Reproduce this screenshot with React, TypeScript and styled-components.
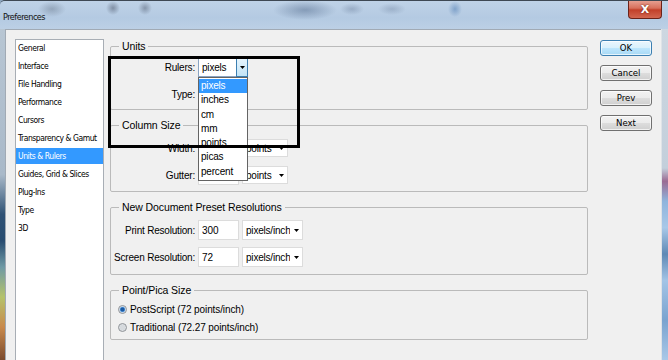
import React from "react";
import styled, { createGlobalStyle, css } from "styled-components";

const GlobalStyle = createGlobalStyle`
  html, body {
    margin: 0;
    padding: 0;
  }
  body {
    width: 668px;
    height: 360px;
    overflow: hidden;
    background: #8ea6bf;
    font-family: "Liberation Sans", Arial, sans-serif;
    color: #000;
  }
  * {
    box-sizing: border-box;
  }
`;

const narrow = `"Liberation Sans Narrow", "DejaVu Sans Condensed", "Liberation Sans", sans-serif`;

const Window = styled.div`
  width: 668px;
  height: 360px;
  display: flex;
  flex-direction: column;
  overflow: hidden;
  border-top: 1px solid #3e4853;
  border-top-left-radius: 5px;
`;

// glass caption with the blurred desktop behind it
const TitleBar = styled.div`
  height: 28px;
  flex-shrink: 0;
  display: flex;
  justify-content: space-between;
  align-items: flex-start;
  background:
    radial-gradient(ellipse 14px 8px at 52px 8px, rgba(90, 105, 125, 0.4), transparent),
    radial-gradient(ellipse 7px 7px at 113px 7px, rgba(70, 80, 100, 0.5), transparent),
    radial-gradient(ellipse 7px 7px at 145px 7px, rgba(70, 80, 100, 0.45), transparent),
    radial-gradient(ellipse 32px 10px at 305px 9px, rgba(70, 95, 130, 0.45), transparent),
    radial-gradient(ellipse 12px 6px at 352px 8px, rgba(90, 110, 140, 0.35), transparent),
    radial-gradient(ellipse 14px 6px at 392px 8px, rgba(90, 110, 140, 0.3), transparent),
    radial-gradient(ellipse 7px 8px at 455px 8px, rgba(60, 110, 170, 0.45), transparent),
    linear-gradient(#bfd2e7, #b4cae2 60%, #bcd0e5);
`;

const Caption = styled.span`
  margin: 11px 0 0 3px;
  font-family: ${narrow};
  font-size: 9px;
  letter-spacing: -0.5px;
  line-height: 11px;
  color: #111;
`;

const CloseButton = styled.div`
  width: 34px;
  height: 19px;
  margin-right: 6px;
  margin-top: -1px;
  display: flex;
  align-items: center;
  justify-content: center;
  border: 1px solid #6b2219;
  border-top: 0;
  border-radius: 0 0 4px 4px;
  background: linear-gradient(#e9a597 0%, #d8705c 45%, #c2402a 55%, #d26650 100%);
  color: #fff;
  font-family: "DejaVu Sans", sans-serif;
  font-weight: bold;
  font-size: 11px;
  text-shadow: 0 0 2px #5a1208;
`;

const Body = styled.div`
  flex: 1;
  min-height: 0;
  display: flex;
`;

const LeftFrame = styled.div`
  width: 5px;
  flex-shrink: 0;
  background: linear-gradient(
    #b8c6d3 0%,
    #a9b9c9 44%,
    #2f5275 56%,
    #284c70 64%,
    #6f9aa5 72%,
    #b5c36b 81%,
    #c98a4c 90%,
    #7a4a2e 100%
  );
`;

const RightFrame = styled.div`
  width: 7px;
  flex-shrink: 0;
  border-left: 1px solid #dfe3e7;
  background: linear-gradient(
    #cdd7e1 0%,
    #c3cfdb 42%,
    #9a6b93 46%,
    #8fb4dc 52%,
    #a9c8e8 60%,
    #5f89b5 68%,
    #a3c4e6 76%,
    #7aa3cf 88%,
    #a9c8e8 100%
  );
`;

const Panel = styled.div`
  flex: 1;
  position: relative;
  display: flex;
  align-items: flex-start;
  padding: 9px 8px 0 9px;
  background: #f0f0f0;
  border: 1px solid #a1aab4;
  border-bottom: 0;
  border-right: 0;
`;

const Sidebar = styled.ul`
  list-style: none;
  margin: 0;
  padding: 0;
  width: 89px;
  height: 340px;
  flex-shrink: 0;
  overflow: hidden;
  background: #fff;
  border: 1px solid #a8aeb5;
`;

const NavItem = styled.li<{ $active?: boolean }>`
  height: 16px;
  margin-bottom: 2px;
  padding: 1px 0 0 2px;
  font-family: ${narrow};
  font-size: 8.5px;
  letter-spacing: -0.45px;
  line-height: 15px;
  white-space: nowrap;
  background: ${(p) => (p.$active ? "#3399ff" : "transparent")};
  color: ${(p) => (p.$active ? "#fff" : "#000")};
`;

const Main = styled.div`
  width: 478px;
  flex-shrink: 0;
  margin: 1px 0 0 6px;
  display: flex;
  flex-direction: column;
  gap: 9px;
`;

const Group = styled.fieldset<{ $pt: number; $pb: number }>`
  margin: 0;
  min-width: 0;
  padding: ${(p) => p.$pt}px 0 ${(p) => p.$pb}px;
  border: 1px solid #bababa;
  border-radius: 2px;
`;

const Legend = styled.legend`
  margin-left: 8px;
  padding: 0 3px;
  font-size: 10.5px;
  line-height: 12px;
  letter-spacing: -0.1px;
`;

const Rows = styled.div<{ $gap: number }>`
  display: flex;
  flex-direction: column;
  gap: ${(p) => p.$gap}px;
`;

const Row = styled.div`
  height: 20px;
  display: flex;
  align-items: center;
  gap: 3px;
`;

const Label = styled.span`
  width: 84px;
  flex-shrink: 0;
  text-align: right;
  font-size: 10px;
  letter-spacing: -0.2px;
  white-space: nowrap;
`;

const SelectBox = styled.div<{ $w: number; $h?: number; $focus?: boolean }>`
  position: relative;
  width: ${(p) => p.$w}px;
  height: ${(p) => p.$h ?? 20}px;
  flex-shrink: 0;
  display: flex;
  align-items: center;
  padding-left: 3px;
  background: #fff;
  border: 1px solid ${(p) => (p.$focus ? "#8aa4c2" : "#dcdcdc")};
  font-size: 10px;
  letter-spacing: -0.2px;
`;

const SelectText = styled.span`
  flex: 1;
  white-space: nowrap;
  overflow: hidden;
`;

const ArrowBox = styled.span<{ $hot?: boolean }>`
  width: 12px;
  align-self: stretch;
  display: flex;
  align-items: center;
  justify-content: center;
  ${(p) =>
    p.$hot &&
    css`
      background: linear-gradient(#e8f5fd, #c2e4f7);
      border: 1px solid #3c7fb1;
      margin: -1px -1px -1px 0;
    `}
`;

const Dropdown = styled.ul`
  position: absolute;
  left: -1px;
  top: calc(100% + 1px);
  width: 50px;
  margin: 0;
  padding: 1px 0;
  list-style: none;
  background: #fff;
  border: 1px solid #646464;
  z-index: 2;
`;

const Option = styled.li<{ $sel?: boolean }>`
  height: 14.3px;
  line-height: 14.3px;
  padding-left: 2px;
  font-size: 10px;
  background: ${(p) => (p.$sel ? "#3399ff" : "transparent")};
  color: ${(p) => (p.$sel ? "#fff" : "#000")};
`;

const TextField = styled.input`
  width: 41px;
  height: 20px;
  flex-shrink: 0;
  margin: 0;
  padding: 0 3px;
  border: 1px solid #dcdcdc;
  background: #fff;
  font-family: "Liberation Sans", Arial, sans-serif;
  font-size: 10px;
  color: #000;
  outline: none;
`;

const RadioRow = styled.label`
  height: 18px;
  display: flex;
  align-items: center;
  gap: 3px;
  padding-left: 7px;
  font-size: 10px;
  letter-spacing: -0.1px;
`;

const RadioDot = styled.span<{ $on?: boolean }>`
  width: 9px;
  height: 9px;
  border-radius: 50%;
  border: 1px solid #8e9297;
  background: ${(p) =>
    p.$on
      ? "radial-gradient(circle, #1c5aa3 0 1.6px, #5f9fe0 2.4px, #e2e8ef 3.2px, #f6f6f6 100%)"
      : "radial-gradient(circle, #d6dade 0 2.5px, #eef0f2 100%)"};
`;

const ButtonColumn = styled.div`
  width: 52px;
  flex-shrink: 0;
  margin: 1px 0 0 12px;
  display: flex;
  flex-direction: column;
  gap: 9px;
`;

const DialogButton = styled.button<{ $default?: boolean }>`
  height: 16px;
  margin: 0;
  padding: 0;
  border: 1px solid ${(p) => (p.$default ? "#3c7fb1" : "#707070")};
  border-radius: 3px;
  background: ${(p) =>
    p.$default
      ? "linear-gradient(#eaf6fd, #d9f0fc 50%, #bee6fd 51%, #a7d9f5)"
      : "linear-gradient(#f2f2f2, #ebebeb 50%, #dddddd 51%, #cfcfcf)"};
  box-shadow: inset 0 0 0 1px rgba(255, 255, 255, 0.7);
  font-family: ${narrow};
  font-size: 9.5px;
  line-height: 14px;
  color: #000;
`;

const Annotation = styled.div`
  position: absolute;
  left: 102px;
  top: 26px;
  width: 192px;
  height: 92px;
  border: 3px solid #000;
  z-index: 3;
  pointer-events: none;
`;

function Arrow() {
  return (
    <svg width="5" height="3" viewBox="0 0 5 3">
      <path d="M0 0h5L2.5 3z" fill="#000" />
    </svg>
  );
}

function Select({
  w,
  h,
  value,
  focus,
  children,
}: {
  w: number;
  h?: number;
  value?: string;
  focus?: boolean;
  children?: React.ReactNode;
}) {
  return (
    <SelectBox $w={w} $h={h} $focus={focus}>
      <SelectText>{value}</SelectText>
      <ArrowBox $hot={focus}>
        <Arrow />
      </ArrowBox>
      {children}
    </SelectBox>
  );
}

const sections = [
  "General",
  "Interface",
  "File Handling",
  "Performance",
  "Cursors",
  "Transparency & Gamut",
  "Units & Rulers",
  "Guides, Grid & Slices",
  "Plug-Ins",
  "Type",
  "3D",
];

const units = ["pixels", "inches", "cm", "mm", "points", "picas", "percent"];

export default function App() {
  return (
    <>
      <GlobalStyle />
      <Window>
        <TitleBar>
          <Caption>Preferences</Caption>
          <CloseButton>X</CloseButton>
        </TitleBar>
        <Body>
          <LeftFrame />
          <Panel>
            <Sidebar>
              {sections.map((s) => (
                <NavItem key={s} $active={s === "Units & Rulers"}>
                  {s}
                </NavItem>
              ))}
            </Sidebar>

            <Main>
              <Group $pt={5} $pb={5}>
                <Legend>Units</Legend>
                <Rows $gap={7}>
                  <Row>
                    <Label>Rulers:</Label>
                    <Select w={50} value="pixels" focus>
                      <Dropdown>
                        {units.map((u) => (
                          <Option key={u} $sel={u === "pixels"}>
                            {u}
                          </Option>
                        ))}
                      </Dropdown>
                    </Select>
                  </Row>
                  <Row>
                    <Label>Type:</Label>
                    {/* value sits under the open list */}
                    <Select w={50} />
                  </Row>
                </Rows>
              </Group>

              <Group $pt={7} $pb={6}>
                <Legend>Column Size</Legend>
                <Rows $gap={7}>
                  <Row>
                    <Label>Width:</Label>
                    <TextField defaultValue="180" readOnly />
                    <Select w={46} h={18} value="points" />
                  </Row>
                  <Row>
                    <Label>Gutter:</Label>
                    <TextField defaultValue="12" readOnly />
                    <Select w={46} h={18} value="points" />
                  </Row>
                </Rows>
              </Group>

              <Group $pt={7} $pb={7}>
                <Legend>New Document Preset Resolutions</Legend>
                <Rows $gap={7}>
                  <Row>
                    <Label>Print Resolution:</Label>
                    <TextField defaultValue="300" readOnly />
                    <Select w={61} value="pixels/inch" />
                  </Row>
                  <Row>
                    <Label>Screen Resolution:</Label>
                    <TextField defaultValue="72" readOnly />
                    <Select w={61} value="pixels/inch" />
                  </Row>
                </Rows>
              </Group>

              <Group $pt={4} $pb={3}>
                <Legend>Point/Pica Size</Legend>
                <Rows $gap={0}>
                  <RadioRow>
                    <RadioDot $on />
                    PostScript (72 points/inch)
                  </RadioRow>
                  <RadioRow>
                    <RadioDot />
                    Traditional (72.27 points/inch)
                  </RadioRow>
                </Rows>
              </Group>
            </Main>

            <ButtonColumn>
              <DialogButton $default>OK</DialogButton>
              <DialogButton>Cancel</DialogButton>
              <DialogButton>Prev</DialogButton>
              <DialogButton>Next</DialogButton>
            </ButtonColumn>

            <Annotation />
          </Panel>
          <RightFrame />
        </Body>
      </Window>
    </>
  );
}
